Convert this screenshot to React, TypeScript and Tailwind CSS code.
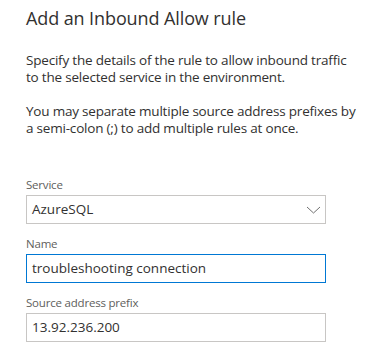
const Field = ({ label, value, focused }: { label: string; value: string; focused?: boolean }) => {
  return (
    <div className="flex flex-col">
      <label className="h-[18px] text-[11.5px] leading-[18px] tracking-[-0.2px] text-[#605e5c]">{label}</label>
      <div
        className={
          focused
            ? "mt-[1px] flex h-[29px] w-[300px] items-center border border-[#0078d4] px-[5px] text-[13.5px] text-[#323130]"
            : "mt-[1px] flex h-[29px] w-[300px] items-center border border-[#c8c6c4] px-[5px] text-[13.5px] text-[#323130]"
        }
      >
        {value}
      </div>
    </div>
  )
}

const App = () => {
  return (
    <div className="h-[356px] w-[389px] bg-white pl-[26px] pt-[5px] font-['Open_Sans',sans-serif] text-[#323130]">
      <h1 className="text-[18px] leading-[26px] tracking-[-0.1px]">Add an Inbound Allow rule</h1>
      <p className="mt-[21px] text-[13.5px] leading-[17px] tracking-[-0.2px]">
        Specify the details of the rule to allow inbound traffic
        <br />
        to the selected service in the environment.
      </p>
      <p className="mt-[17px] text-[13.5px] leading-[17px] tracking-[-0.2px]">
        You may separate multiple source address prefixes by
        <br />
        a semi-colon (;) to add multiple rules at once.
      </p>
      <div className="mt-[39px] flex flex-col gap-[11px]">
        <div className="flex flex-col">
          <label className="h-[18px] text-[11.5px] leading-[18px] tracking-[-0.2px] text-[#605e5c]">Service</label>
          <div className="mt-[1px] flex h-[29px] w-[300px] items-center justify-between border border-[#c8c6c4] pl-[5px] pr-[4px] text-[13.5px]">
            <span>AzureSQL</span>
            <svg width="15" height="8" viewBox="0 0 15 8" fill="none">
              <path d="M1 1 L7.5 7 L14 1" stroke="#707070" strokeWidth="1" />
            </svg>
          </div>
        </div>
        <Field label="Name" value="troubleshooting connection" focused />
        <Field label="Source address prefix" value="13.92.236.200" />
      </div>
    </div>
  )
}

export default App
